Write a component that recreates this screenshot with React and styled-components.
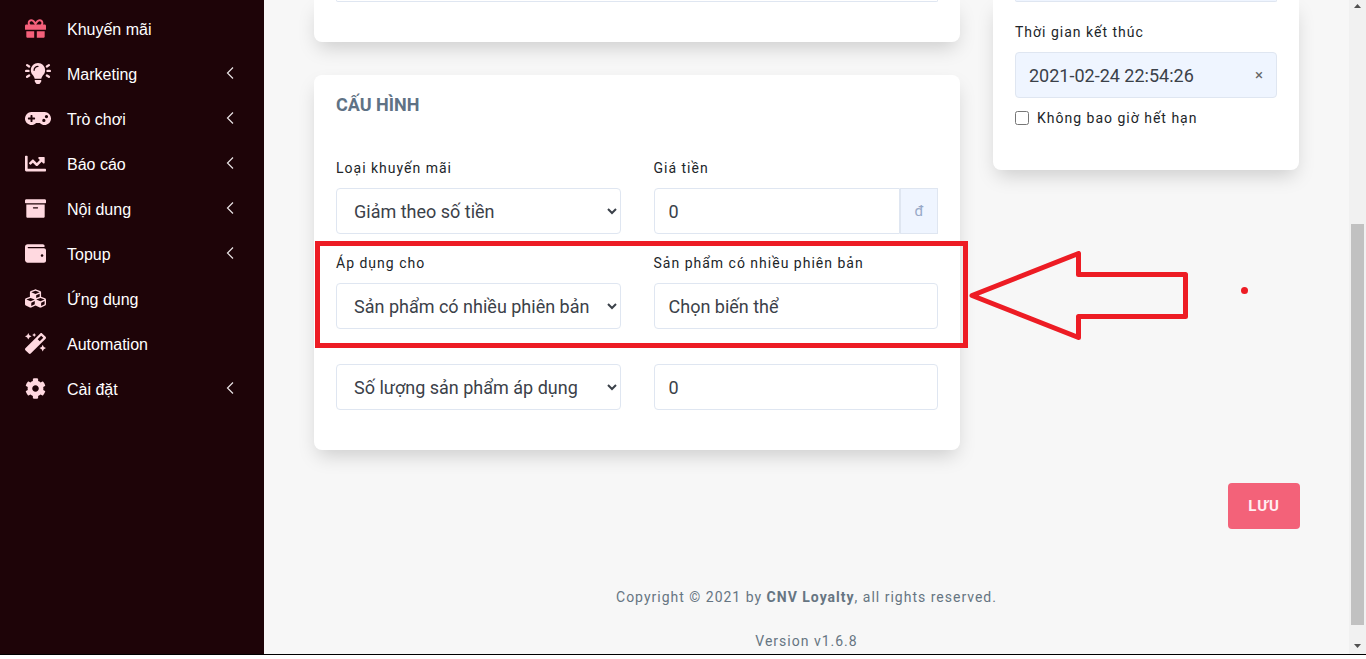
import React from "react";
import styled, { createGlobalStyle } from "styled-components";
import { FaGift, FaGamepad, FaChartLine, FaArchive, FaWallet, FaCubes, FaMagic, FaCog } from "react-icons/fa";


const GlobalStyle = createGlobalStyle`
  * {
    box-sizing: border-box;
  }

  body {
    margin: 0;
    background-color: white;
    font-family: Roboto, "Liberation Sans", sans-serif;
  }
`

const Screen = styled.div`
  height: 100vh;
  padding-bottom: 4px;
  overflow: hidden;
`

const Shell = styled.div`
  display: flex;
  height: 100%;
  border-bottom: 1px solid black;
  background-color: #f7f7f7;
  overflow: hidden;
`

const Sidebar = styled.nav`
  flex: 0 0 264px;
  padding-top: 6px;
  background-color: #1e0408;
`

const Menu = styled.ul`
  margin: 0;
  padding: 0;
  list-style: none;
`

const MenuLink = styled.a`
  display: flex;
  align-items: center;
  height: 45px;
  padding: 0 29px 0 25px;
  font-family: "Liberation Sans", Arial, sans-serif;
  font-size: 16px;
  color: white;
  text-decoration: none;
`

const MenuIcon = styled.span`
  display: flex;
  flex: 0 0 42px;
  color: ${props => props.$active ? '#f5607a' : '#ffd9e0'};

  svg {
    height: 21px;
    width: ${props => props.$wide ? '26px' : '21px'};
  }
`

const MenuText = styled.span`
  flex: 1;
  padding-top: 2px;
`

const Main = styled.main`
  flex: 1;
  min-width: 0;
`

const Columns = styled.div`
  display: grid;
  grid-template-columns: 19fr 9fr;
  align-items: start;
  gap: 33px;
  padding: 0 50px;
`

const Column = styled.div`
  display: flex;
  flex-direction: column;
  gap: 33px;
`

const Card = styled.section`
  padding: 18px 22px 40px;
  border-radius: 8px;
  background-color: white;
  box-shadow: 0 9px 20px -4px rgba(0, 0, 0, 0.18);
`

const OpenCard = styled(Card)`
  padding-top: 0;
  border-radius: 0 0 8px 8px;
`

const CardTitle = styled.h2`
  margin: 0 0 39px;
  font-size: 18px;
  font-weight: bold;
  line-height: 24px;
  color: #5f7285;
`

const Row = styled.div`
  display: grid;
  grid-template-columns: 1fr 1fr;
  gap: 33px;
  margin-bottom: 17px;
  position: relative;
`

const LastRow = styled(Row)`
  margin-top: 35px;
  margin-bottom: 0;
`

const Field = styled.div`
  display: flex;
  flex-direction: column;
  gap: 8px;
  min-width: 0;
`

const Label = styled.label`
  font-size: 14px;
  line-height: 24px;
  letter-spacing: 1px;
  color: #212529;
`

const Input = styled.input`
  width: 100%;
  min-width: 0;
  height: 46px;
  padding: 0 14px;
  border: 1px solid #dfe6f1;
  border-radius: 4px;
  background-color: white;
  font-family: inherit;
  font-size: 18px;
  color: #3b4149;
`

const Select = styled.select`
  width: 100%;
  height: 46px;
  padding: 0 13px;
  border: 1px solid #dfe6f1;
  border-radius: 4px;
  background-color: white;
  font-family: inherit;
  font-size: 18px;
  color: #3b4149;
`

/* bottom edge of a field scrolled out of view */
const InputEdge = styled(Input)`
  display: block;
  height: 2px;
  border-top: none;
  border-radius: 0 0 4px 4px;
  background-color: ${props => props.$filled ? '#eff5ff' : 'white'};
`

const InputGroup = styled.div`
  display: flex;

  ${Input} {
    border-radius: 4px 0 0 4px;
  }
`

const Addon = styled.span`
  flex: 0 0 38px;
  border: 1px solid #dfe6f1;
  background-color: #eff5ff;
  font-size: 15px;
  line-height: 44px;
  text-align: center;
  color: #98a9c8;
`

const DateBox = styled.div`
  display: flex;
  height: 46px;
  border: 1px solid #dfe6f1;
  border-radius: 4px;
  background-color: #eff5ff;

  ${Input} {
    height: 44px;
    padding: 0 13px;
    border: none;
    background-color: transparent;
  }
`

const Clear = styled.button`
  flex: 0 0 34px;
  padding: 0;
  border: none;
  background: none;
  font-family: inherit;
  font-size: 15px;
  color: #666;
`

const Check = styled.div`
  display: flex;
  align-items: center;
  gap: 8px;
  padding: 8px 0 0;

  input {
    width: 14px;
    height: 14px;
    margin: 0;
  }
`

const EndDate = styled(Field)`
  margin-top: 18px;
`

const Highlight = styled.div`
  position: absolute;
  top: -10px;
  right: -30px;
  bottom: -19px;
  left: -21px;
  border: 5px solid #ed1c24;
  pointer-events: none;
`

const Arrow = styled.svg`
  position: absolute;
  top: 0;
  left: calc(100% + 30px);
  width: 282px;
  height: 90px;
  pointer-events: none;
`

const Actions = styled.div`
  display: flex;
  justify-content: flex-end;
  padding: 33px 49px 0;
`

const Save = styled.button`
  width: 72px;
  height: 46px;
  padding: 0;
  border: none;
  border-radius: 4px;
  background-color: #f36279;
  font-family: inherit;
  font-size: 15px;
  font-weight: bold;
  letter-spacing: 1px;
  color: #ffeef1;
`

const Footer = styled.footer`
  padding-top: 56px;
  text-align: center;
  font-size: 14px;
  line-height: 24px;
  letter-spacing: 1px;
  color: #667582;

  p {
    margin: 0 0 20px;
  }
`

const Scroll = styled.div`
  display: flex;
  flex-direction: column;
  align-items: center;
  flex: 0 0 17px;
  padding: 4px 0 6px;
  background-color: #f1f1f1;
`

const ScrollSpace = styled.div`
  flex: 216;
`

const ScrollThumb = styled.div`
  flex: 401;
  width: 13px;
  margin-bottom: 19px;
  background-color: #c1c1c1;
`


const Bulb = () => (
  <svg viewBox="0 0 640 512" fill="currentColor">
    <path d="M320 0C223 0 144 79 144 174c0 44 16 84 43 115 18 21 42 58 52 95h162c10-37 34-74 52-95 27-31 43-71 43-115C496 79 417 0 320 0zm0 96c-44 0-80 36-80 80a16 16 0 0 1-32 0c0-62 50-112 112-112a16 16 0 0 1 0 32zM240 416h160v34l-28 46c-5 10-14 16-24 16h-56c-10 0-19-6-24-16l-28-46z" />
    <g fill="none" stroke="currentColor" strokeWidth="58" strokeLinecap="round">
      <path d="M29 192h56M555 192h56M52 50l50 32M588 50l-50 32M52 338l50-32M588 338l-50-32" />
    </g>
  </svg>
)

const Chevron = () => (
  <svg width="10" height="16" viewBox="0 0 10 16" fill="none" stroke="#e9e3e4" strokeWidth="1.2">
    <path d="M8 1.5 2.5 7 8 12.5" />
  </svg>
)

const menu = [
  { text: 'Khuyến mãi', icon: <FaGift />, active: true },
  { text: 'Marketing', icon: <Bulb />, wide: true, sub: true },
  { text: 'Trò chơi', icon: <FaGamepad />, wide: true, sub: true },
  { text: 'Báo cáo', icon: <FaChartLine />, sub: true },
  { text: 'Nội dung', icon: <FaArchive />, sub: true },
  { text: 'Topup', icon: <FaWallet />, sub: true },
  { text: 'Ứng dụng', icon: <FaCubes /> },
  { text: 'Automation', icon: <FaMagic /> },
  { text: 'Cài đặt', icon: <FaCog />, sub: true },
]

export default function App() {
  return(
    <Screen>
      <GlobalStyle />
      <Shell>
        <Sidebar>
          <Menu>
            {menu.map(item => (
              <li key={item.text}>
                <MenuLink href="#">
                  <MenuIcon $active={item.active} $wide={item.wide}>{item.icon}</MenuIcon>
                  <MenuText>{item.text}</MenuText>
                  {item.sub && <Chevron />}
                </MenuLink>
              </li>
            ))}
          </Menu>
        </Sidebar>


        <Main>
          <Columns>
            <Column>
              <OpenCard>
                <InputEdge aria-label="Mô tả" />
              </OpenCard>

              <Card>
                <CardTitle>CẤU HÌNH</CardTitle>

                <Row>
                  <Field>
                    <Label htmlFor="type">Loại khuyến mãi</Label>
                    <Select id="type">
                      <option>Giảm theo số tiền</option>
                    </Select>
                  </Field>

                  <Field>
                    <Label htmlFor="price">Giá tiền</Label>
                    <InputGroup>
                      <Input id="price" defaultValue="0" />
                      <Addon>đ</Addon>
                    </InputGroup>
                  </Field>
                </Row>

                <Row>
                  <Field>
                    <Label htmlFor="target">Áp dụng cho</Label>
                    <Select id="target">
                      <option>Sản phẩm có nhiều phiên bản</option>
                    </Select>
                  </Field>

                  <Field>
                    <Label htmlFor="variant">Sản phẩm có nhiều phiên bản</Label>
                    <Input id="variant" defaultValue="Chọn biến thể" />
                  </Field>

                  <Highlight />
                  <Arrow viewBox="0 0 282 90">
                    <path
                      d="M4 44.5 110.5 2.5V23.5H217.5V65.5H110.5V86.5Z"
                      fill="none"
                      stroke="#ed1c24"
                      strokeWidth="5"
                      strokeLinejoin="round"
                    />
                    <circle cx="276.5" cy="39.5" r="3.5" fill="#ed1c24" />
                  </Arrow>
                </Row>

                <LastRow>
                  <Select aria-label="Điều kiện">
                    <option>Số lượng sản phẩm áp dụng</option>
                  </Select>
                  <Input aria-label="Số lượng" defaultValue="0" />
                </LastRow>
              </Card>
            </Column>


            <OpenCard>
              <InputEdge $filled aria-label="Thời gian bắt đầu" />

              <EndDate>
                <Label htmlFor="end">Thời gian kết thúc</Label>
                <DateBox>
                  <Input id="end" defaultValue="2021-02-24 22:54:26" />
                  <Clear aria-label="Xóa">×</Clear>
                </DateBox>
              </EndDate>

              <Check>
                <input type="checkbox" id="forever" />
                <Label htmlFor="forever">Không bao giờ hết hạn</Label>
              </Check>
            </OpenCard>
          </Columns>


          <Actions>
            <Save>LƯU</Save>
          </Actions>

          <Footer>
            <p>Copyright © 2021 by <b>CNV Loyalty</b>, all rights reserved.</p>
            <p>Version v1.6.8</p>
          </Footer>
        </Main>


        <Scroll>
          <svg width="7" height="4" viewBox="0 0 7 4" fill="#505050"><path d="M0 4 3.5 0 7 4z" /></svg>
          <ScrollSpace />
          <ScrollThumb />
          <svg width="7" height="4" viewBox="0 0 7 4" fill="#505050"><path d="M0 0h7L3.5 4z" /></svg>
        </Scroll>
      </Shell>
    </Screen>
  )
}
